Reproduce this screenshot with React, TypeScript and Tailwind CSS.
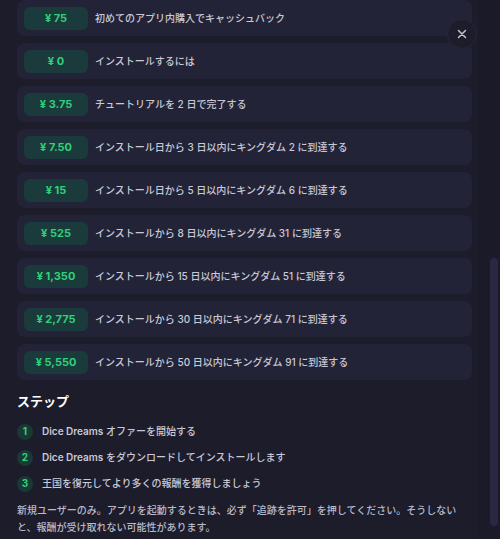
import React from 'react';

const rewards = [
  { amount: '¥ 75', label: '初めてのアプリ内購入でキャッシュバック' },
  { amount: '¥ 0', label: 'インストールするには' },
  { amount: '¥ 3.75', label: 'チュートリアルを 2 日で完了する' },
  { amount: '¥ 7.50', label: 'インストール日から 3 日以内にキングダム 2 に到達する' },
  { amount: '¥ 15', label: 'インストール日から 5 日以内にキングダム 6 に到達する' },
  { amount: '¥ 525', label: 'インストールから 8 日以内にキングダム 31 に到達する' },
  { amount: '¥ 1,350', label: 'インストールから 15 日以内にキングダム 51 に到達する' },
  { amount: '¥ 2,775', label: 'インストールから 30 日以内にキングダム 71 に到達する' },
  { amount: '¥ 5,550', label: 'インストールから 50 日以内にキングダム 91 に到達する' },
];

const steps = [
  { brand: 'Dice Dreams', rest: ' オファーを開始する' },
  { brand: 'Dice Dreams', rest: ' をダウンロードしてインストールします' },
  { brand: '', rest: '王国を復元してより多くの報酬を獲得しましょう' },
];

const font = "font-['Inter','Noto_Sans_CJK_JP',sans-serif]";

export default function App() {
  return (
    <div className={`relative h-[539px] w-[500px] overflow-hidden bg-[#1c1c2b] ${font}`}>
      {/* Scroll content */}
      <div className="h-full pl-[17px] pr-[28px]">
        <div className="flex flex-col gap-[7px]">
          {rewards.map((r, i) => (
            <div
              key={i}
              className="flex h-[36px] items-center gap-[7px] rounded-lg bg-[#222336] px-[7px]"
            >
              <div className="flex h-[23px] w-[64px] shrink-0 items-center justify-center rounded-md bg-[#1b3a3b] text-[11px] font-bold text-[#2fd07a]">
                {r.amount}
              </div>
              <span className="text-[10px] font-medium text-[#c9c9d6]">{r.label}</span>
            </div>
          ))}
        </div>

        {/* Steps */}
        <h2 className="mt-[12px] text-[13px] font-bold text-white">ステップ</h2>
        <div className="mt-[12px] flex flex-col gap-[10px]">
          {steps.map((s, i) => (
            <div key={i} className="flex h-[16px] items-center gap-[9px]">
              <div className="flex h-[16px] w-[16px] shrink-0 items-center justify-center rounded-full bg-[#1a3834] text-[10px] font-bold text-[#2fd07a]">
                {i + 1}
              </div>
              <span className="text-[10px] font-medium text-[#c9c9d6]">
                {s.brand && <span className="font-semibold">{s.brand}</span>}
                {s.rest}
              </span>
            </div>
          ))}
        </div>

        <p className="mt-[10px] whitespace-nowrap text-[10px] font-medium leading-[17px] text-[#b9b9c8]">
          {'新規ユーザーのみ。アプリを起動するときは、必ず「追跡を許可」を押してください。そうしない'}
          <br />
          {'と、報酬が受け取れない可能性があります。'}
        </p>
      </div>

      {/* Scrollbar */}
      <div className="absolute right-0 top-0 h-full w-[22px] bg-[#1a1a28]">
        <div className="absolute right-[2px] top-[258px] h-[268px] w-[8px] rounded-full bg-[#282940]" />
      </div>

      {/* Close button */}
      <button className="absolute left-[447px] top-[19px] flex h-[30px] w-[30px] items-center justify-center rounded-full border border-[#26273a] bg-[#1c1c2b] text-[#c4c4d0]">
        <svg width="10" height="10" viewBox="0 0 10 10" fill="none" stroke="currentColor" strokeWidth="1.5" strokeLinecap="round">
          <path d="M1.5 1.5l7 7M8.5 1.5l-7 7" />
        </svg>
      </button>
    </div>
  );
}
